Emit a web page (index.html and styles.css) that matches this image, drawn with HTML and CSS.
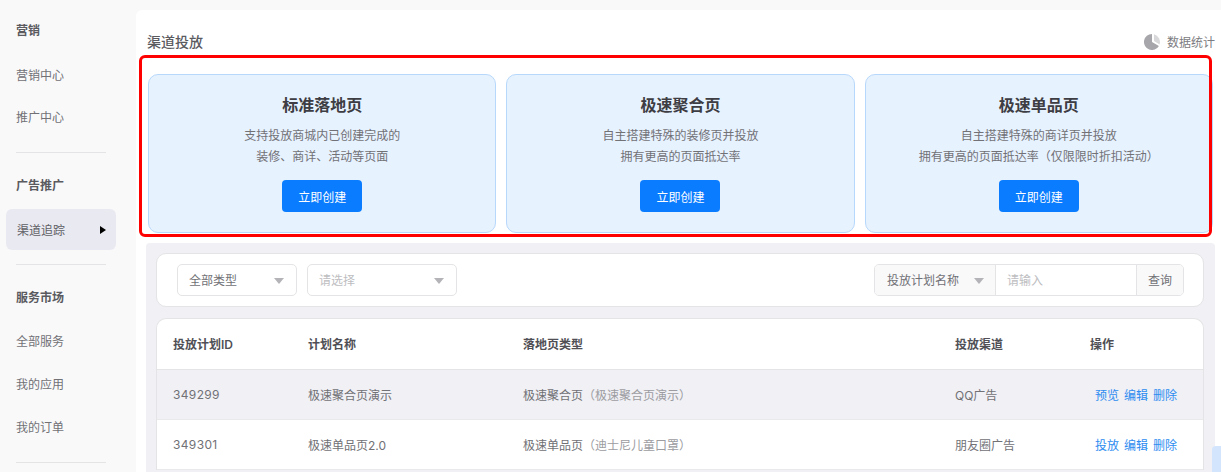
FILE: index.html
```html
<!DOCTYPE html>
<html lang="zh">
<head>
<meta charset="utf-8">
<title>渠道投放</title>
<link rel="stylesheet" href="styles.css">
</head>
<body>
<div class="app">
  <aside class="side">
    <div class="group">
      <div class="head">营销</div>
      <div class="item">营销中心</div>
      <div class="item">推广中心</div>
    </div>
    <div class="group">
      <div class="head">广告推广</div>
      <div class="item active">渠道追踪<svg class="arrow" width="6" height="8" viewBox="0 0 6 8"><path d="M0 0L6 4L0 8Z" fill="#000"/></svg></div>
    </div>
    <div class="group tall">
      <div class="head">服务市场</div>
      <div class="item">全部服务</div>
      <div class="item">我的应用</div>
      <div class="item">我的订单</div>
    </div>
  </aside>
  <main class="panel">
    <header class="title-row">
      <h1 class="title">渠道投放</h1>
      <div class="stats">
        <svg width="16" height="16" viewBox="0 0 16 16"><path d="M8 0A8 8 0 1 0 14.9 12L8 8Z" fill="#a6a6ab"/><path d="M10 .3A8 8 0 0 1 15.6 10.4L10 7Z" fill="#d8d8db"/></svg>
        <span>数据统计</span>
      </div>
    </header>
    <section class="cards">
      <div class="highlight"></div>
      <article class="card">
        <h2>标准落地页</h2>
        <p>支持投放商城内已创建完成的<br>装修、商详、活动等页面</p>
        <button class="create">立即创建</button>
      </article>
      <article class="card">
        <h2>极速聚合页</h2>
        <p>自主搭建特殊的装修页并投放<br>拥有更高的页面抵达率</p>
        <button class="create">立即创建</button>
      </article>
      <article class="card">
        <h2>极速单品页</h2>
        <p>自主搭建特殊的商详页并投放<br>拥有更高的页面抵达率（仅限限时折扣活动）</p>
        <button class="create">立即创建</button>
      </article>
    </section>
    <section class="list">
      <div class="filters">
        <div class="select type">全部类型<i class="caret"></i></div>
        <div class="select choose">请选择<i class="caret"></i></div>
        <div class="search">
          <div class="search-type">投放计划名称<i class="caret"></i></div>
          <div class="search-input">请输入</div>
          <div class="search-btn">查询</div>
        </div>
      </div>
      <div class="table">
        <div class="row thead">
          <div class="c1">投放计划ID</div><div class="c2">计划名称</div><div class="c3">落地页类型</div><div class="c4">投放渠道</div><div class="c5">操作</div>
        </div>
        <div class="row hover">
          <div class="c1 num">349299</div><div class="c2">极速聚合页演示</div><div class="c3">极速聚合页<span class="note">（极速聚合页演示）</span></div><div class="c4">QQ广告</div><div class="c5 ops"><a>预览</a><a>编辑</a><a>删除</a></div>
        </div>
        <div class="row">
          <div class="c1 num">349301</div><div class="c2">极速单品页2.0</div><div class="c3">极速单品页<span class="note">（迪士尼儿童口罩）</span></div><div class="c4">朋友圈广告</div><div class="c5 ops"><a>投放</a><a>编辑</a><a>删除</a></div>
        </div>
      </div>
    </section>
    <div class="float-tab"></div>
  </main>
</div>
</body>
</html>
```
FILE: styles.css
```css
* { box-sizing: border-box; }
html, body { margin: 0; height: 100%; overflow: hidden; }
body {
  background: #f9f9fa;
  color: #717176;
  font-family: Inter, "Noto Sans CJK SC", "Liberation Sans", sans-serif;
  font-size: 12px;
}
.app { display: flex; height: 472px; overflow: hidden; }
.side { width: 136px; flex: none; padding-top: 9px; }
.group { margin: 0 30px 11px 16px; border-bottom: 1px solid #e4e4e6; padding-bottom: 14px; }
.group.tall { padding-bottom: 13px; }
.head { height: 43px; line-height: 43px; font-weight: 600; color: #5a5a5f; }
.item { height: 42px; line-height: 43px; }
.head + .item { margin-top: 2px; }
.tall .item { height: 43px; line-height: 44px; }
.tall .head + .item { margin-top: 1px; }
.item.active {
  width: 110px; height: 41px; margin-left: -10px; padding: 1px 10px 0 11px;
  background: #e9e9f1; border-radius: 6px; color: #5f5f65;
  display: flex; align-items: center; justify-content: space-between;
}

.panel {
  flex: 1; min-width: 0; margin-top: 10px; background: #fff; border-radius: 6px 0 0 0;
  position: relative; padding: 0 6px 0 10px;
}
.title-row { display: flex; justify-content: space-between; align-items: center; height: 45px; padding-top: 18px; }
.title { margin: 0; font-size: 14px; font-weight: 500; color: #5a5a5f; line-height: 28px; padding-left: 1px; }
.stats { display: flex; align-items: center; gap: 7px; color: #7c7c81; }
.cards { display: flex; gap: 10px; padding: 19px 2px 0 2px; position: relative; }
.highlight {
  position: absolute; left: -7px; top: 0; right: 3px; height: 182px; z-index: 1;
  border: 3px solid #f00; border-radius: 6px; pointer-events: none;
}
.card {
  flex: 1 1 0; height: 159px; background: #e7f2ff; border: 1px solid #b8d8fb; border-radius: 10px;
  display: flex; flex-direction: column; align-items: center; padding-top: 18px;
}
.card h2 { margin: 0; font-size: 16px; line-height: 24px; font-weight: 600; color: #3d3d43; }
.card p { margin: 8px 0 0; line-height: 21px; text-align: center; color: #717176; }
.create {
  margin-top: 13px; width: 80px; height: 32px; border: 0; border-radius: 4px;
  background: #0a7cff; color: #fff; font: inherit;
}
.list {
  margin-top: 10px; background: #f0f0f5; border-radius: 4px 4px 0 0;
  padding: 10px 11px 0 10px; height: 240px;
}
.filters {
  height: 54px; background: #fff; border: 1px solid #e4e4e6; border-radius: 10px;
  display: flex; align-items: center; padding: 0 19px 0 20px;
}
.select {
  height: 32px; border: 1px solid #e4e4e6; border-radius: 5px; display: flex; align-items: center;
  justify-content: space-between; padding: 0 12px 1px 11px; background: #fff;
}
.type { width: 120px; margin-right: 10px; }
.choose { width: 150px; color: #bdbdc1; }
.caret {
  width: 0; height: 0; border-left: 5px solid transparent; border-right: 5px solid transparent;
  border-top: 6px solid #b4b4b8; margin-top: 2px;
}
.search { margin-left: auto; display: flex; height: 32px; width: 310px; border: 1px solid #e4e4e6; border-radius: 5px; overflow: hidden; }
.search-type { width: 121px; background: #f9f9fa; border-right: 1px solid #e4e4e6; display: flex; align-items: center; justify-content: space-between; padding: 0 11px 1px 12px; }
.search-input { flex: 1; display: flex; align-items: center; padding: 0 0 1px 11px; color: #bdbdc1; }
.search-btn { width: 47px; background: #f9f9fa; border-left: 1px solid #e4e4e6; display: flex; align-items: center; justify-content: center; padding-bottom: 1px; }
.table { margin-top: 11px; background: #fff; border: 1px solid #e4e4e6; border-bottom: 0; border-radius: 10px 10px 0 0; }
.row { display: flex; align-items: center; height: 50px; border-bottom: 1px solid #e9e9ec; }
.row.hover { background: #f0f0f5; }
.thead { height: 51px; padding-bottom: 2px; font-weight: 600; color: #4f4f55; border-bottom-color: #e4e4e6; }
.c1 { width: 151px; padding-left: 16px; }
.c2 { width: 215px; }
.c3 { width: 432px; }
.c4 { width: 135px; }
.c5 { flex: 1; }
.num { letter-spacing: .35px; }
.note { color: #9c9ca1; }
.ops { display: flex; gap: 5px; padding-left: 5px; }
.ops a { color: #2d8cf0; }
.float-tab { position: absolute; right: 0; top: 436px; width: 9px; height: 30px; background: #d2e5fd; border-radius: 4px 0 0 0; }
```
